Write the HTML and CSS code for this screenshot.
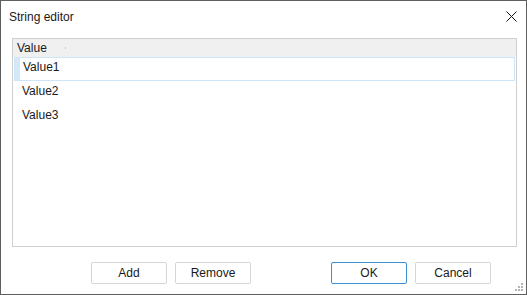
FILE: index.html
```html
<!DOCTYPE html>
<html lang="en">
<head>
    <meta charset="UTF-8">
    <title>String editor</title>
    <link rel="stylesheet" href="styles.css">
</head>
<body>
    <div class="dialog">
        <div class="titlebar">
            <span class="title">String editor</span>
            <button class="close-btn" aria-label="Close">
                <svg width="11" height="11" viewBox="0 0 11 11">
                    <path d="M0.5 0.5 L10.5 10.5 M10.5 0.5 L0.5 10.5" stroke="#111" stroke-width="1" fill="none"/>
                </svg>
            </button>
        </div>

        <div class="list">
            <div class="list-header">
                <span>Value</span>
                <span class="col-mark"></span>
            </div>
            <div class="list-row selected"><span class="row-mark"></span>Value1</div>
            <div class="list-row">Value2</div>
            <div class="list-row">Value3</div>
        </div>

        <div class="footer">
            <div class="btn-group">
                <button class="btn">Add</button>
                <button class="btn">Remove</button>
            </div>
            <div class="btn-group">
                <button class="btn btn-default">OK</button>
                <button class="btn">Cancel</button>
            </div>
        </div>

        <div class="grip">
            <i></i>
            <i></i><i></i>
            <i></i><i></i><i></i>
        </div>
    </div>
</body>
</html>
```

FILE: styles.css
```css
* {
    margin: 0;
    padding: 0;
    box-sizing: border-box;
}
body {
    font-family: 'Liberation Sans', Arial, sans-serif;
    font-size: 12px;
    color: #1a1a1a;
    background: #fff;
}
.dialog {
    position: relative;
    width: 527px;
    height: 295px;
    border: 1px solid #5f5f5f;
    background: #fff;
    display: flex;
    flex-direction: column;
}
.titlebar {
    height: 37px;
    display: flex;
    align-items: flex-start;
    justify-content: space-between;
    padding: 9px 9px 0 8px;
}
.title {
    font-size: 12px;
    line-height: 14px;
}
.close-btn {
    border: none;
    background: none;
    width: 11px;
    height: 11px;
    margin-top: 1px;
    display: flex;
}
.list {
    margin: 0 9px 0 11px;
    height: 209px;
    border: 1px solid #cfcfcf;
    display: flex;
    flex-direction: column;
}
.list-header {
    height: 18px;
    background: #f0f0f0;
    padding-left: 4px;
    display: flex;
    align-items: center;
    line-height: 14px;
}
.col-mark {
    width: 1px;
    height: 2px;
    background: #9fd0f0;
    margin-left: 18px;
}
.list-row {
    height: 24px;
    display: flex;
    align-items: center;
    padding: 0 0 4px 9px;
    line-height: 14px;
}
.list-row.selected {
    margin: 0 1px;
    border: 1px solid #cde6f7;
    padding-left: 1px;
}
.row-mark {
    width: 5px;
    height: 22px;
    background: #d5e8f7;
    margin: 4px 3px 0 -1px;
}
.footer {
    display: flex;
    gap: 80px;
    padding: 15px 0 0 90px;
}
.btn-group {
    display: flex;
    gap: 8px;
}
.btn {
    width: 76px;
    height: 22px;
    font-family: inherit;
    font-size: 12px;
    color: #1a1a1a;
    background: #fff;
    border: 1px solid #d6d6d6;
    border-radius: 2px;
}
.btn-default {
    border-color: #3d8fd4;
}
.grip {
    position: absolute;
    right: 2px;
    bottom: 2px;
    width: 9px;
    height: 9px;
    display: grid;
    grid-template-columns: repeat(3, 2px);
    grid-template-rows: repeat(3, 2px);
    gap: 1px;
}
.grip i {
    background: #b4b4b4;
}
.grip i:nth-child(1) { grid-area: 1 / 3; }
.grip i:nth-child(2) { grid-area: 2 / 2; }
.grip i:nth-child(3) { grid-area: 2 / 3; }
.grip i:nth-child(4) { grid-area: 3 / 1; }
.grip i:nth-child(5) { grid-area: 3 / 2; }
.grip i:nth-child(6) { grid-area: 3 / 3; }
```
